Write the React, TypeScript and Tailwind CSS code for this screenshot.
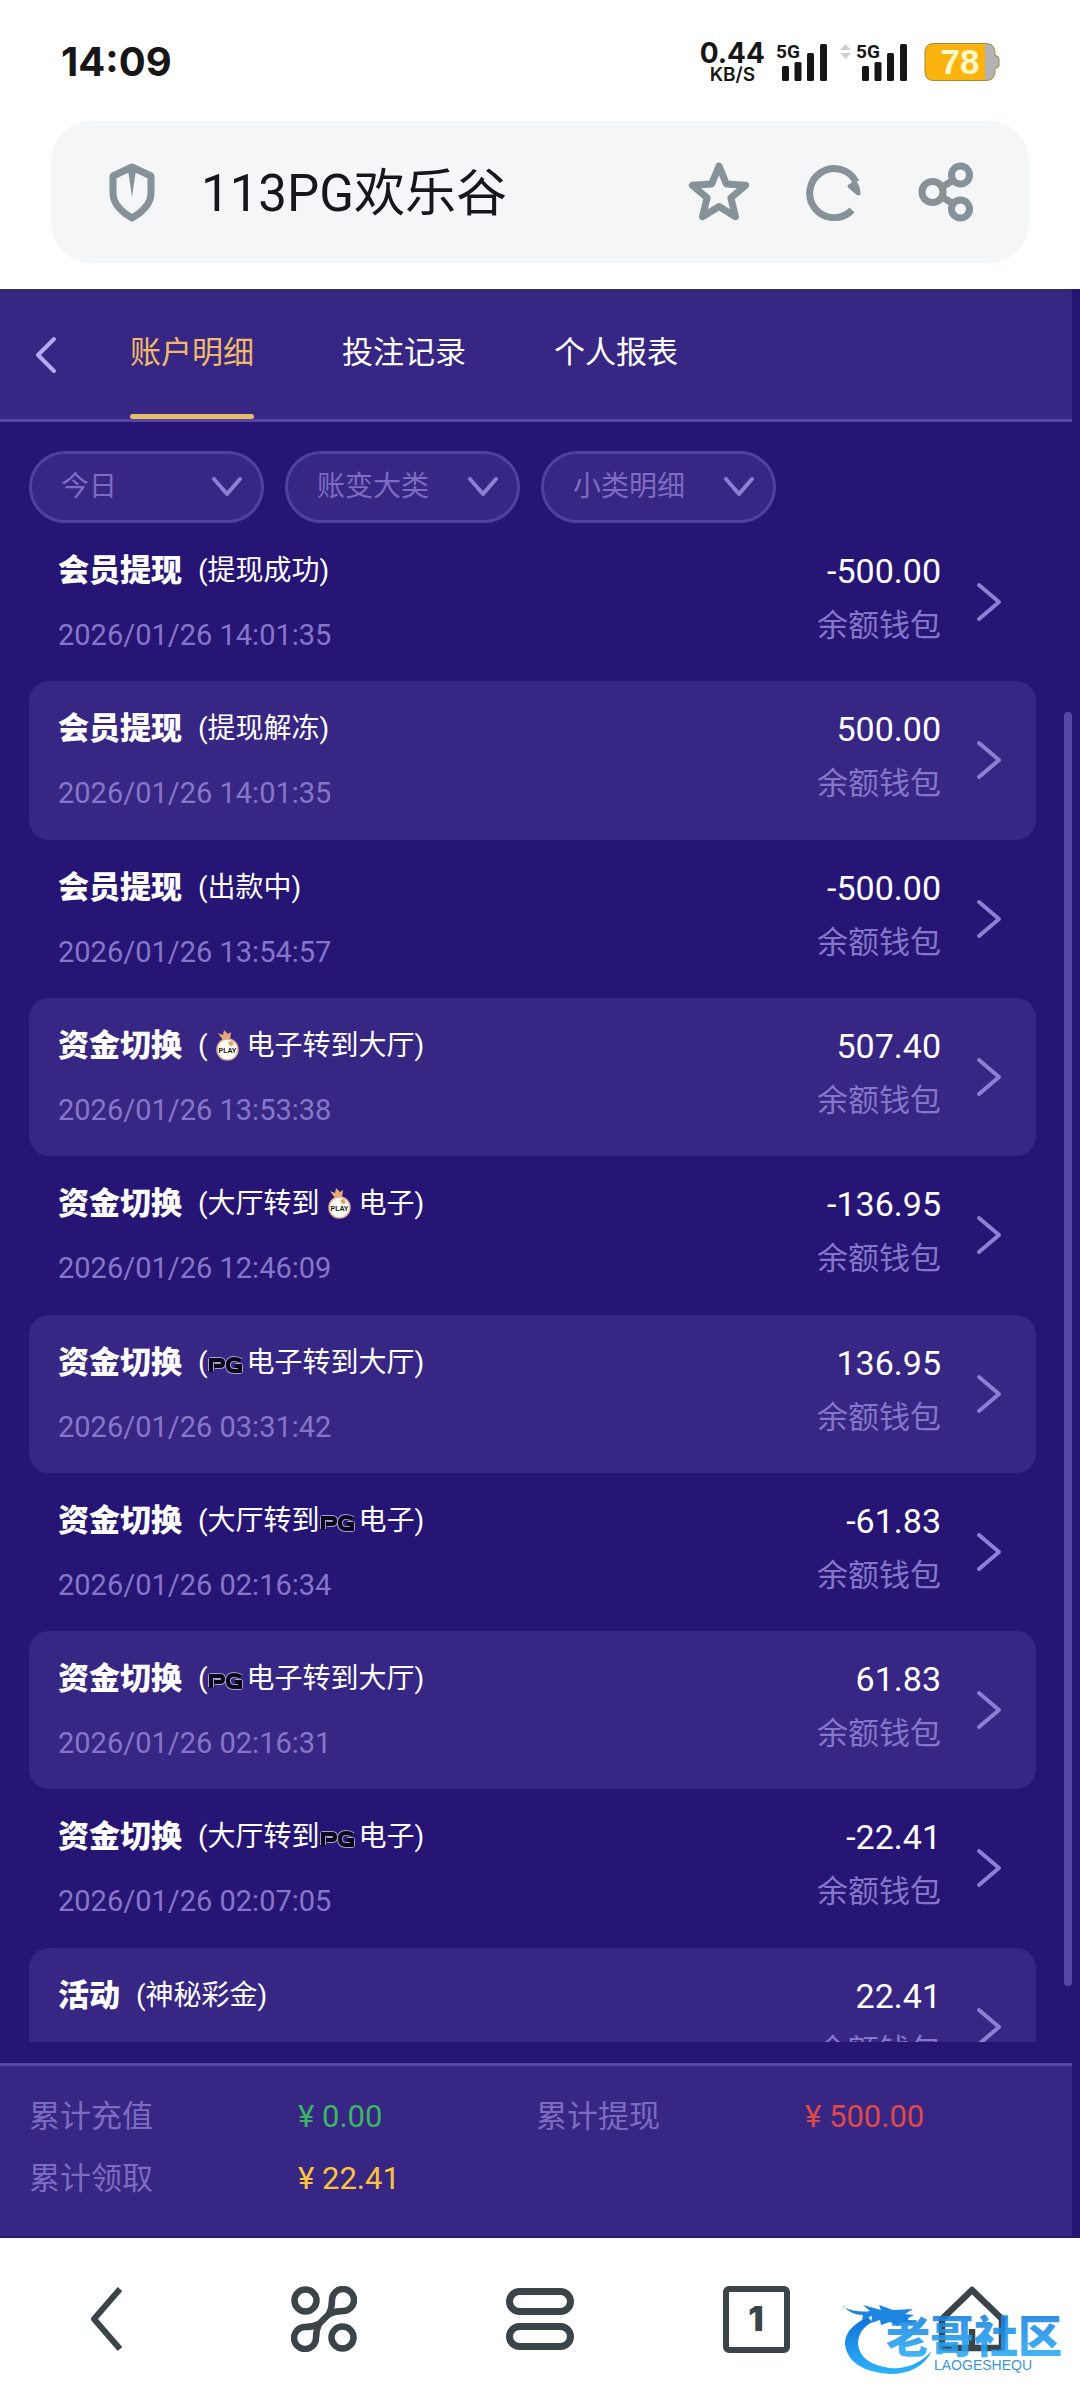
import type { ReactNode } from 'react';

const sans = 'font-[Roboto,"Noto_Sans_CJK_SC",sans-serif]';

type GameLogo = 'play' | 'pg';

interface Transaction {
  title: string;
  before: string;
  logo?: GameLogo;
  after?: string;
  date: string;
  amount: string;
}

const transactions: Transaction[] = [
  { title: '会员提现', before: '(提现成功)', date: '2026/01/26 14:01:35', amount: '-500.00' },
  { title: '会员提现', before: '(提现解冻)', date: '2026/01/26 14:01:35', amount: '500.00' },
  { title: '会员提现', before: '(出款中)', date: '2026/01/26 13:54:57', amount: '-500.00' },
  { title: '资金切换', before: '(', logo: 'play', after: '电子转到大厅)', date: '2026/01/26 13:53:38', amount: '507.40' },
  { title: '资金切换', before: '(大厅转到', logo: 'play', after: '电子)', date: '2026/01/26 12:46:09', amount: '-136.95' },
  { title: '资金切换', before: '(', logo: 'pg', after: '电子转到大厅)', date: '2026/01/26 03:31:42', amount: '136.95' },
  { title: '资金切换', before: '(大厅转到', logo: 'pg', after: '电子)', date: '2026/01/26 02:16:34', amount: '-61.83' },
  { title: '资金切换', before: '(', logo: 'pg', after: '电子转到大厅)', date: '2026/01/26 02:16:31', amount: '61.83' },
  { title: '资金切换', before: '(大厅转到', logo: 'pg', after: '电子)', date: '2026/01/26 02:07:05', amount: '-22.41' },
  { title: '活动', before: '(神秘彩金)', date: '', amount: '22.41' },
];

const tabs = ['账户明细', '投注记录', '个人报表'];
const filters = ['今日', '账变大类', '小类明细'];

const totals = [
  { label: '累计充值', value: '¥ 0.00', color: 'text-[#3ab566]' },
  { label: '累计提现', value: '¥ 500.00', color: 'text-[#dc4a4a]' },
  { label: '累计领取', value: '¥ 22.41', color: 'text-[#fcc43e]' },
];

function Signal() {
  return (
    <div className="flex items-start">
      <span className="text-[19px] leading-[16px] font-bold font-[Roboto,sans-serif] w-[24px]">5G</span>
      <svg className="-ml-[18px]" width="46" height="37" viewBox="0 0 46 37" fill="currentColor">
        <rect x="0" y="22" width="7" height="15" rx="1.5" />
        <rect x="12.500" y="18" width="7" height="19" rx="1.5" />
        <rect x="25" y="9" width="7" height="28" rx="1.5" />
        <rect x="38" y="0" width="7" height="37" rx="1.5" />
      </svg>
    </div>
  );
}

function StatusBar() {
  return (
    <div className="flex items-start justify-between h-[121px] pl-[61px] pr-[80px] pt-[42px] text-[#161616]">
      <time className="text-[40px] leading-[40px] font-bold font-[Inter,sans-serif]">14:09</time>
      <div className="flex items-start">
        <div className="flex flex-col items-center font-[Inter,sans-serif] font-bold mr-[11px]">
          <span className="text-[28px] leading-[23px]">0.44</span>
          <span className="text-[19px] leading-[19px] font-semibold">KB/S</span>
        </div>
        <div className="flex items-start pt-[2px]">
          <Signal />
          <svg className="ml-[12px] mr-[5px]" width="11" height="15" viewBox="0 0 11 15" fill="#cfcfcf">
            <path d="M5.500 0L11 6H0zM5.500 15L0 9h11z" />
          </svg>
          <Signal />
        </div>
        <svg className="ml-[16px]" width="76" height="40" viewBox="0 0 76 40">
          <path d="M60 1.500h3q7 0 8 8v3.500q4 1 4 3v8q0 2-4 3v3.500q-1 8-8 8h-3z" fill="#b3b3b3" />
          <path d="M61 1.500H10Q1 1.500 1 10v20q0 8.500 9 8.500h51z" fill="#fbb30f" />
          <path d="M10 1.500h52q8 0 9 8v4q4 1 4 3v7q0 2-4 3v4q-1 8-9 8H10Q1 38.500 1 30V10q0-8.500 9-8.500z" fill="none" stroke="#a58a3c" strokeWidth="1" />
          <text x="36" y="32" textAnchor="middle" fontSize="35" fontWeight="700" fill="#fff8c8" fontFamily="Liberation Sans, sans-serif">78</text>
        </svg>
      </div>
    </div>
  );
}

function AddressBar() {
  return (
    <div className="mx-[51px] h-[142px] rounded-[40px] bg-[#f4f6f8] flex items-center text-[#869298]">
      <button aria-label="安全" className="ml-[58px]">
        <svg width="46" height="60" viewBox="0 0 46 60" fill="none">
          <path d="M23 5L42 14v17q0 14-19 25Q4 45 4 31V14z" stroke="currentColor" strokeWidth="7" strokeLinejoin="round" />
          <path d="M19 8h8l-4 27z" fill="currentColor" />
        </svg>
      </button>
      <span className="ml-[46px] pt-[4px] flex-1 text-[51px] leading-[60px] text-[#15181a]">113PG欢乐谷</span>
      <div className="flex items-center mr-[55px] gap-[56px]">
        <button aria-label="收藏">
          <svg width="62" height="62" viewBox="0 0 62 62" fill="none" stroke="currentColor" strokeWidth="7" strokeLinejoin="round">
            <path d="M31 5l7.300 17.900 19.300 1.400-14.700 12.600 4.600 18.800L31 45.500l-16.500 10.200 4.600-18.800L4.400 24.300l19.300-1.400z" />
          </svg>
        </button>
        <button aria-label="刷新">
          <svg width="56" height="58" viewBox="0 0 56 58" fill="none" stroke="currentColor" strokeWidth="7">
            <path d="M46 47A24.500 24.500 0 1 1 50 19" />
            <path d="M47 14q8 8 7.500 18-3 1-5-1l-8-7q0-3 4-4z" fill="currentColor" stroke="none" />
          </svg>
        </button>
        <button aria-label="分享">
          <svg width="56" height="60" viewBox="0 0 56 60" fill="none" stroke="currentColor" strokeWidth="7">
            <circle cx="14.500" cy="30" r="10.500" />
            <circle cx="42.500" cy="13" r="9" />
            <circle cx="42.500" cy="47" r="9" />
            <path d="M24 25l10-6M24 35l10 6" />
          </svg>
        </button>
      </div>
    </div>
  );
}

function PlayLogo() {
  return (
    <svg className="inline-block mx-[8px] align-[-6px]" width="23" height="31" viewBox="0 0 23 31">
      <path d="M7 10L2 3l5 2 1-5 4 4 3-2-1 8z" fill="#e9a878" />
      <circle cx="11.500" cy="19.500" r="10.500" fill="#fffdf4" stroke="#e0b09a" strokeWidth="1.500" />
      <path d="M12 12l4-1 2 4-4 1z" fill="#d9a860" />
      <text x="11.500" y="22.500" textAnchor="middle" fontSize="7" fontWeight="700" fill="#1a1a1a" fontFamily="Liberation Sans, sans-serif">PLAY</text>
    </svg>
  );
}

function PgLogo() {
  return (
    <svg className="inline-block mr-[3px] align-[-2px]" width="36" height="18" viewBox="0 0 36 18" fill="none">
      <g stroke="#a99ddb" strokeWidth="6" strokeLinejoin="round">
        <path d="M3 15V4h9q3 0 3 3t-3 3H7" />
        <path d="M33 5q-3-2-7-2-6 0-6 6t6 6h6v-5h-5" />
      </g>
      <g stroke="#0b0616" strokeWidth="4">
        <path d="M3 16V4h9q3 0 3 3t-3 3H6" />
        <path d="M33 5q-3-2-7-2-6 0-6 6t6 6h6v-5h-5" />
      </g>
    </svg>
  );
}

function TransactionRow({ item, striped }: { item: Transaction; striped: boolean }) {
  return (
    <li className={`flex items-start rounded-[20px] pl-[29px] pr-[34px] ${striped ? 'bg-[#382684]' : ''}`}>
      <div className="flex-1 pt-[28px]">
        <div className="flex items-center h-[40px] text-white">
          <span className="text-[31px] leading-[40px] font-black">{item.title}</span>
          <span className="ml-[16px] text-[28px] leading-[40px] whitespace-nowrap">
            {item.before}
            {item.logo === 'play' && <PlayLogo />}
            {item.logo === 'pg' && <PgLogo />}
            {item.after}
          </span>
        </div>
        <div className="mt-[24px] text-[29px] leading-[40px] text-[#8676c8]">{item.date}</div>
      </div>
      <div className="pt-[28px] text-right">
        <div className="text-[34px] leading-[40px] text-white">{item.amount}</div>
        <div className="mt-[15px] text-[31px] leading-[40px] text-[#8676c8]">余额钱包</div>
      </div>
      <button aria-label="查看详情" className="ml-[35px] mt-[59px]">
        <svg width="26" height="42" viewBox="0 0 26 42" fill="none" stroke="#8f7fd0" strokeWidth="4" strokeLinecap="round" strokeLinejoin="round">
          <path d="M3 3l20 17L3 37" />
        </svg>
      </button>
    </li>
  );
}

function NavButton({ label, children }: { label: string; children: ReactNode }) {
  return (
    <button aria-label={label} className="flex items-center justify-center">
      {children}
    </button>
  );
}

function Watermark() {
  return (
    <svg className="absolute right-[12px] bottom-[24px]" width="226" height="74" viewBox="0 0 226 74">
      <defs>
        <linearGradient id="wm" x1="0" y1="0" x2="0" y2="1">
          <stop offset="0" stopColor="#1173d8" />
          <stop offset="1" stopColor="#2bb3fb" />
        </linearGradient>
      </defs>
      <path d="M26 15Q2 26 3 43q4 26 45 29 30 0 42-23-18 19-42 17-30-4-32-24 0-14 14-22z" fill="url(#wm)" />
      <path d="M1 5q14 6 27 4l-7-6 18 5-2-5 14 5 20-1-8 5 9 1-7 4 6 4-12-1-3 4-8-4-9 3-1-5-9 3 1-7-10 4 1-5q-12 0-20-9z" fill="#1c86e2" />
      <text x="44" y="51" fontSize="44" fontWeight="900" fill="url(#wm)" fillOpacity="0.88" fontFamily="Noto Sans CJK SC, sans-serif">老哥社区</text>
      <text x="92" y="68" fontSize="14" fill="#3b96dc" fontFamily="Liberation Sans, sans-serif">LAOGESHEQU</text>
    </svg>
  );
}

function BottomNav() {
  return (
    <nav className="relative grid grid-cols-5 h-[162px] bg-white text-[#3a4449]">
      <NavButton label="后退">
        <svg width="38" height="66" viewBox="0 0 38 66" fill="none" stroke="currentColor" strokeWidth="6">
          <path d="M31 3L5 33l26 30" strokeLinejoin="round" />
        </svg>
      </NavButton>
      <NavButton label="应用">
        <svg width="66" height="66" viewBox="0 0 66 66" fill="none" stroke="currentColor" strokeWidth="6.500" strokeLinejoin="round">
          <circle cx="14.500" cy="14.500" r="11" />
          <circle cx="51.500" cy="51.500" r="11" />
          <path d="M38 28Q41 22 41 14a11 11 0 1 1 11 11q-8 0-14 3z" />
          <path d="M28 38q-3 6-3 14a11 11 0 1 1-11-11q8 0 14-3z" />
          <path d="M38 28L28 38" />
        </svg>
      </NavButton>
      <NavButton label="菜单">
        <svg width="68" height="62" viewBox="0 0 68 62" fill="none" stroke="currentColor" strokeWidth="7">
          <rect x="3.500" y="3.500" width="61" height="20" rx="10" />
          <rect x="3.500" y="38.500" width="61" height="20" rx="10" />
        </svg>
      </NavButton>
      <NavButton label="标签页">
        <span className="flex items-center justify-center w-[67px] h-[67px] rounded-[6px] border-[6px] border-current text-[34px] leading-[40px] font-black font-[Inter,sans-serif]">
          1
        </span>
      </NavButton>
      <NavButton label="主页">
        <svg width="68" height="68" viewBox="0 0 68 68" fill="none" stroke="currentColor" strokeWidth="6.500" strokeLinejoin="round">
          <path d="M4 63V34L34 5l30 29v29z" />
          <path d="M34 44v19" />
        </svg>
      </NavButton>
      <Watermark />
    </nav>
  );
}

export default function App() {
  return (
    <div className={`bg-white ${sans}`}>
      <StatusBar />
      <AddressBar />

      <main className="mt-[26px] bg-[#271576] pr-[8px] border-b-2 border-[#2a1b62]">
        {/* Tabs */}
        <header className="flex bg-[#382684] border-t-2 border-t-[#352a66] border-b-[3px] border-b-[#5747a3]">
          <button aria-label="返回" className="ml-[34px] mr-[72px]">
            <svg width="24" height="38" viewBox="0 0 24 38" fill="none" stroke="#b7a9f2" strokeWidth="4" strokeLinecap="round" strokeLinejoin="round">
              <path d="M20 3L4 19l16 16" />
            </svg>
          </button>
          <div className="flex gap-[88px]">
            {tabs.map((tab, i) => (
              <button
                key={tab}
                className={`flex flex-col items-center text-[31px] leading-[40px] pt-[42px] ${i === 0 ? 'text-[#eebb68]' : 'text-white'}`}
              >
                {tab}
                <span className={`mt-[41px] w-full h-[5px] rounded-full ${i === 0 ? 'bg-[#e8bd6c]' : ''}`} />
              </button>
            ))}
          </div>
        </header>

        {/* Filters */}
        <div className="flex gap-[21px] pt-[29px] pl-[29px]">
          {filters.map((filter) => (
            <button
              key={filter}
              className="flex items-center justify-between w-[235px] h-[72px] rounded-full border-[3px] border-[#5040a0] bg-[#382684] pl-[29px] pr-[18px] text-[28px] leading-[40px] text-[#7d6cc0]"
            >
              {filter}
              <svg width="32" height="22" viewBox="0 0 32 22" fill="none" stroke="#8f7fd0" strokeWidth="4" strokeLinecap="round" strokeLinejoin="round">
                <path d="M3 3l13 15L29 3" />
              </svg>
            </button>
          ))}
        </div>

        {/* Transactions */}
        <div className="relative h-[1519px] overflow-hidden">
          <ul className="grid grid-rows-10 h-[1583px] pl-[29px] pr-[36px]">
            {transactions.map((item, i) => (
              <TransactionRow key={i} item={item} striped={i % 2 === 1} />
            ))}
          </ul>
          <div className="absolute right-0 top-[189px] w-[8px] h-[1274px] rounded-full bg-[#5747a3]" />
        </div>

        {/* Totals */}
        <dl className="mt-[21px] grid grid-cols-2 gap-y-[22px] border-t-[3px] border-[#5747a3] bg-[#382684] px-[29px] pt-[31px] pb-[37px] text-[31px] leading-[40px]">
          {totals.map((total) => (
            <div key={total.label} className="flex">
              <dt className="w-[269px] text-[#7d6cc0]">{total.label}</dt>
              <dd className={total.color}>{total.value}</dd>
            </div>
          ))}
        </dl>
      </main>

      <BottomNav />
    </div>
  );
}
